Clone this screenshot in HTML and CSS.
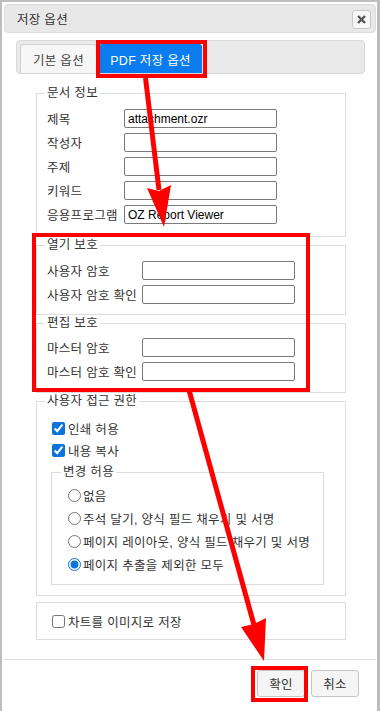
FILE: index.html
```html
<!DOCTYPE html>
<html lang="ko">
<head>
    <meta charset="UTF-8">
    <meta name="viewport" content="width=device-width, initial-scale=1.0">
    <title>저장 옵션</title>
    <link rel="stylesheet" href="styles.css">
</head>
<body>
    <div class="dialog">
        <div class="titlebar">
            <span class="title">저장 옵션</span>
            <button class="close-btn" title="닫기">
                <svg width="9" height="9" viewBox="0 0 9 9"><path d="M1 1L8 8M8 1L1 8" stroke="#555" stroke-width="2.4"/></svg>
            </button>
        </div>

        <div class="tabs">
            <button class="tab">기본 옵션</button>
            <button class="tab active">PDF 저장 옵션</button>
        </div>

        <div class="panel">
            <fieldset class="group">
                <legend>문서 정보</legend>
                <div class="row"><label>제목</label><input type="text" value="attachment.ozr"></div>
                <div class="row"><label>작성자</label><input type="text"></div>
                <div class="row"><label>주제</label><input type="text"></div>
                <div class="row"><label>키워드</label><input type="text"></div>
                <div class="row"><label>응용프로그램</label><input type="text" value="OZ Report Viewer"></div>
            </fieldset>

            <fieldset class="group group-pw">
                <legend>열기 보호</legend>
                <div class="row"><label>사용자 암호</label><input type="password"></div>
                <div class="row"><label>사용자 암호 확인</label><input type="password"></div>
            </fieldset>

            <fieldset class="group group-pw group-edit">
                <legend>편집 보호</legend>
                <div class="row"><label>마스터 암호</label><input type="password"></div>
                <div class="row"><label>마스터 암호 확인</label><input type="password"></div>
            </fieldset>

            <fieldset class="group group-access">
                <legend>사용자 접근 권한</legend>
                <label class="check"><input type="checkbox" checked>인쇄 허용</label>
                <label class="check"><input type="checkbox" checked>내용 복사</label>

                <fieldset class="group inner">
                    <legend>변경 허용</legend>
                    <label class="radio"><input type="radio" name="change">없음</label>
                    <label class="radio"><input type="radio" name="change">주석 달기, 양식 필드 채우기 및 서명</label>
                    <label class="radio"><input type="radio" name="change">페이지 레이아웃, 양식 필드 채우기 및 서명</label>
                    <label class="radio"><input type="radio" name="change" checked>페이지 추출을 제외한 모두</label>
                </fieldset>
            </fieldset>

            <fieldset class="group group-chart">
                <label class="check"><input type="checkbox">차트를 이미지로 저장</label>
            </fieldset>
        </div>

        <div class="footer">
            <button class="btn">확인</button>
            <button class="btn">취소</button>
        </div>
    </div>

    <!-- annotation marks over the dialog -->
    <svg class="marks" width="380" height="711" viewBox="0 0 380 711">
        <g fill="none" stroke="#ff0000" stroke-width="4">
            <rect x="98" y="42" width="107" height="34"/>
            <rect x="34" y="235" width="274" height="155"/>
            <rect x="253" y="668" width="53" height="32"/>
        </g>
        <g stroke="#ff0000" stroke-width="5">
            <line x1="145.5" y1="78" x2="159" y2="190"/>
            <line x1="189" y1="390" x2="254" y2="625"/>
        </g>
        <g fill="#ff0000">
            <polygon points="147,188 164,227 171,185 159,191"/>
            <polygon points="241,627 264,661 266,618 254,624"/>
        </g>
    </svg>
</body>
</html>
```

FILE: styles.css
```css
body {
    margin: 0;
    padding: 0;
    background-color: #bdbdbd;
    font-family: "Liberation Sans", "Noto Sans CJK KR", sans-serif;
    font-size: 12px;
    letter-spacing: 0.3px;
    color: #333;
}

.dialog {
    margin: 2px 3px 0 2px;
    padding: 2px 1px 0 2px;
    background-color: #fff;
    min-height: 709px;
    box-sizing: border-box;
}

.titlebar {
    height: 29px;
    box-sizing: border-box;
    display: flex;
    justify-content: space-between;
    align-items: center;
    padding: 0 4px 0 12px;
    background-color: #e8e8e8;
    border: 1px solid #dcdcdc;
    border-radius: 4px;
}

.title {
    font-size: 12.5px;
    color: #333;
}

.close-btn {
    width: 19px;
    height: 19px;
    padding: 0;
    display: flex;
    align-items: center;
    justify-content: center;
    background-color: #f7f7f7;
    border: 1px solid #c8c8c8;
    border-radius: 3px;
    margin-top: 1px;
}

.tabs {
    margin: 7px 11px 0 12px;
    height: 34px;
    box-sizing: border-box;
    display: flex;
    align-items: flex-end;
    gap: 2px;
    padding-left: 3px;
    background-color: #e9e9e9;
    border: 1px solid #d8d8d8;
    border-radius: 4px;
}

.tab {
    height: 29px;
    padding: 0;
    font-family: inherit;
    font-size: 12.5px;
    letter-spacing: 0.3px;
    color: #444;
    border: 1px solid #cfcfcf;
    border-bottom: none;
    border-radius: 3px 3px 0 0;
    background-color: #f6f6f6;
    width: 77px;
}

.tab.active {
    width: 103px;
    background-color: #0a7cf0;
    border-color: #0a7cf0;
    color: #fff;
}

.panel {
    padding: 0 30px 0 32px;
    margin-top: 11px;
}

.group {
    margin: 0;
    padding: 8px 10px 12px 10px;
    border: 1px solid #dcdcdc;
    min-width: 0;
}

.group legend {
    padding: 0 2px;
    margin-left: -2px;
    line-height: 16px;
    font-size: 12.5px;
    color: #333;
}

.row {
    display: flex;
    align-items: center;
    height: 19px;
    margin-bottom: 5px;
}

.row:last-child {
    margin-bottom: 0;
}

.row label {
    width: 77px;
    flex-shrink: 0;
    font-size: 12.5px;
    white-space: nowrap;
}

.row input {
    width: 153px;
    height: 19px;
    box-sizing: border-box;
    margin: 0;
    padding: 0 3px;
    border: 1px solid #7a7a7a;
    border-radius: 2px;
    font-family: "Liberation Sans", sans-serif;
    font-size: 12px;
    color: #000;
    background-color: #fff;
}

.group-pw {
    padding-bottom: 10px;
}

.group-pw .row label {
    width: 95px;
}

.group-edit {
    padding-top: 7px;
    padding-bottom: 11px;
}

.group-access {
    padding-bottom: 10px;
}

.check,
.radio {
    display: flex;
    align-items: center;
    font-size: 12.5px;
    white-space: nowrap;
}

.check {
    height: 22px;
}

.check input {
    margin: 0 3px 0 5px;
    width: 13px;
    height: 13px;
    accent-color: #0a74d8;
}

.inner {
    margin: 3px 11px 0 4px;
    padding: 4px 10px 8px 11px;
}

.radio {
    height: 23px;
}

.radio input {
    margin: 0 2px 0 5px;
    width: 13px;
    height: 13px;
    accent-color: #0a74d8;
}

.group-chart {
    margin-top: 6px;
    padding: 7px 10px;
}

.footer {
    margin-top: 19px;
    border-top: 1px solid #dcdcdc;
    padding: 10px 17px 0 0;
    display: flex;
    justify-content: flex-end;
    gap: 6px;
}

.btn {
    width: 48px;
    height: 27px;
    padding: 0;
    font-family: inherit;
    font-size: 12.5px;
    letter-spacing: 0.3px;
    color: #333;
    background-color: #f5f5f5;
    border: 1px solid #c6c6c6;
    border-radius: 3px;
}

.marks {
    position: absolute;
    top: 0;
    left: 0;
    pointer-events: none;
}
```
